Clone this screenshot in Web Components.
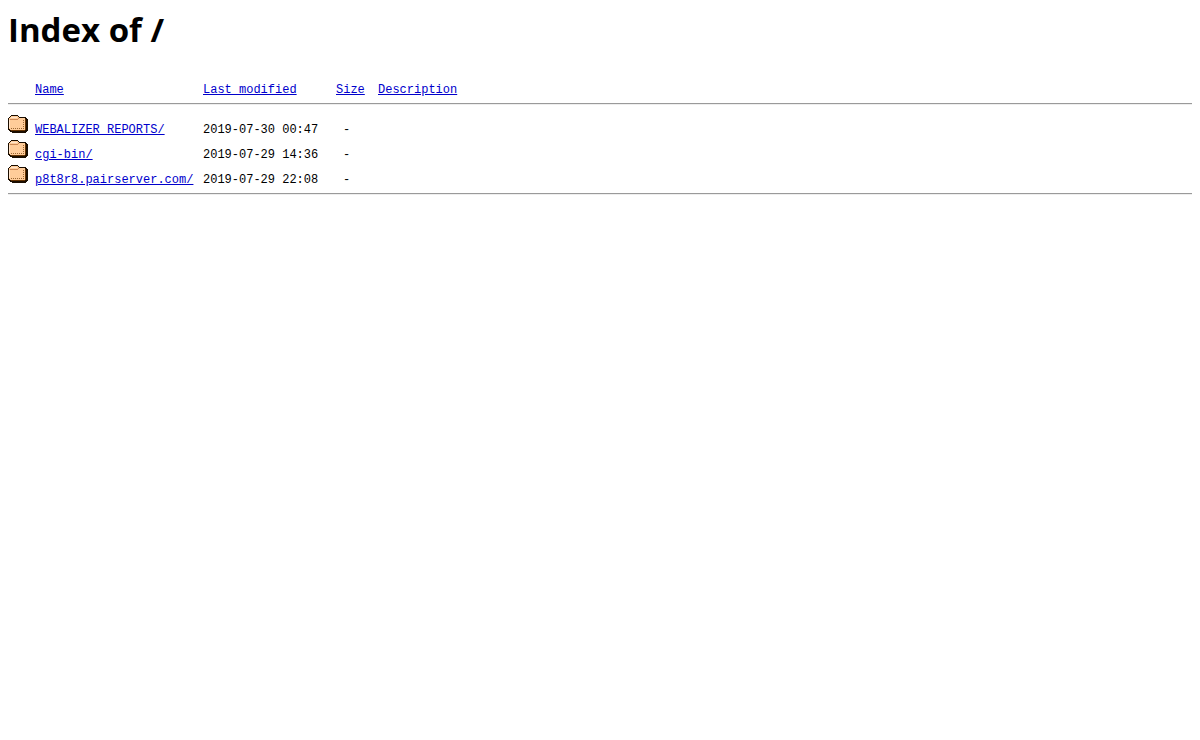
<!DOCTYPE html>
<html lang="en">
<head>
<meta charset="utf-8">
<title>Index of /</title>
<style>
	body {
		margin: 8px;
		background: #fff;
		color: #000;
	}
</style>
</head>
<body>
<index-page>
	<span slot="title">Index of /</span>
	<directory-listing>
		<directory-entry name="WEBALIZER REPORTS/" modified="2019-07-30 00:47" size="-"></directory-entry>
		<directory-entry name="cgi-bin/" modified="2019-07-29 14:36" size="-"></directory-entry>
		<directory-entry name="p8t8r8.pairserver.com/" modified="2019-07-29 22:08" size="-"></directory-entry>
	</directory-listing>
</index-page>

<script>
(function() {
	function makeTemplate(html) {
		const template = document.createElement("template");
		template.innerHTML = html;
		return template;
	}

	const pageTemplate = makeTemplate(`
		<style>
			:host {
				display: block;
			}
			h1 {
				margin: 0 0 29px;
				font: bold 33px/44px "Open Sans", "Noto Sans", sans-serif;
			}
		</style>
		<h1><slot name="title"></slot></h1>
		<slot></slot>
	`);

	const iconTemplate = makeTemplate(`
		<style>
			:host {
				display: block;
				width: 20px;
				height: 18px;
			}
			svg {
				display: block;
			}
		</style>
		<svg width="20" height="18" viewBox="0 0 20 18" shape-rendering="crispEdges" role="img" aria-label="Folder">
			<path fill="#1a0d00" d="M3 0h7v1h1v1h7v1h1v1h1v12h-1v1h-1v1H4v-1H2v-1H1v-1H0V3h1V2h1V1h1z"/>
			<path fill="#663300" d="M17 4h1v11h-1zM3 15h14v1H3z"/>
			<path fill="#ffcc99" d="M3 1h7v1h1v1h6v12H2v-1H1V3h1V2h1z"/>
			<path fill="#cc8855" d="M2 4h8v1H2zM10 3h1v1h-1z"/>
			<path fill="#996633" d="M15 5h1v1h-1zM15 7h1v1h-1zM15 9h1v1h-1zM15 11h1v1h-1zM15 13h1v1h-1zM13 13h1v1h-1zM11 13h1v1h-1zM9 13h1v1H9zM7 13h1v1H7zM5 13h1v1H5zM3 13h1v1H3z"/>
			<path fill="#ffe5cc" d="M3 2h6v1H3zM1 5h1v8H1z"/>
		</svg>
	`);

	const listingTemplate = makeTemplate(`
		<style>
			:host {
				display: block;
				font: 12px/18px "Liberation Mono", monospace;
			}
			table {
				width: 100%;
				table-layout: fixed;
				border-collapse: separate;
				border-spacing: 0;
			}
			.icon { width: 27px; }
			.name { width: 168px; }
			.modified { width: 133px; }
			.size { width: 42px; }
			th, td {
				padding: 0;
				text-align: left;
				vertical-align: top;
				font-weight: normal;
				white-space: nowrap;
			}
			th {
				padding-bottom: 4px;
			}
			td {
				padding-top: 7px;
			}
			td:first-child {
				padding-top: 1px;
			}
			td:nth-child(4) {
				padding-left: 7px;
			}
			.rule td {
				padding: 0;
			}
			hr {
				margin: 0;
				border: 1px solid;
				border-color: #9a9a9a #eee #eee #9a9a9a;
				border-width: 1px 0;
			}
			thead hr {
				margin-bottom: 9px;
			}
			tfoot hr {
				margin-top: 4px;
			}
			a {
				color: #0000cc;
			}
		</style>
		<table>
			<colgroup>
				<col class="icon"><col class="name"><col class="modified"><col class="size"><col>
			</colgroup>
			<thead>
				<tr>
					<th></th>
					<th scope="col"><a href="?C=N;O=D">Name</a></th>
					<th scope="col"><a href="?C=M;O=A">Last modified</a></th>
					<th scope="col"><a href="?C=S;O=A">Size</a></th>
					<th scope="col"><a href="?C=D;O=A">Description</a></th>
				</tr>
				<tr class="rule"><td colspan="5"><hr></td></tr>
			</thead>
			<tbody></tbody>
			<tfoot>
				<tr class="rule"><td colspan="5"><hr></td></tr>
			</tfoot>
		</table>
		<slot hidden></slot>
	`);

	class IndexPage extends HTMLElement {
		constructor() {
			super();
			this.attachShadow({mode: "open"}).appendChild(pageTemplate.content.cloneNode(true));
		}
	}

	class FolderIcon extends HTMLElement {
		constructor() {
			super();
			this.attachShadow({mode: "open"}).appendChild(iconTemplate.content.cloneNode(true));
		}
	}

	// Holds the data of one entry, the listing turns it into a table row
	class DirectoryEntry extends HTMLElement {
		get row() {
			const row = document.createElement("tr");
			const link = document.createElement("a");
			link.href = encodeURI(this.getAttribute("name"));
			link.textContent = this.getAttribute("name");
			row.insertCell().appendChild(document.createElement("folder-icon"));
			row.insertCell().appendChild(link);
			row.insertCell().textContent = this.getAttribute("modified");
			row.insertCell().textContent = this.getAttribute("size");
			row.insertCell().textContent = this.getAttribute("description") || "";
			return row;
		}
	}

	class DirectoryListing extends HTMLElement {
		constructor() {
			super();
			this.attachShadow({mode: "open"}).appendChild(listingTemplate.content.cloneNode(true));
		}

		connectedCallback() {
			const body = this.shadowRoot.querySelector("tbody");
			const entries = [...this.querySelectorAll("directory-entry")];
			body.replaceChildren(...entries.map(entry => entry.row));
		}
	}

	customElements.define("folder-icon", FolderIcon);
	customElements.define("directory-entry", DirectoryEntry);
	customElements.define("directory-listing", DirectoryListing);
	customElements.define("index-page", IndexPage);
})();
</script>
</body>
</html>
